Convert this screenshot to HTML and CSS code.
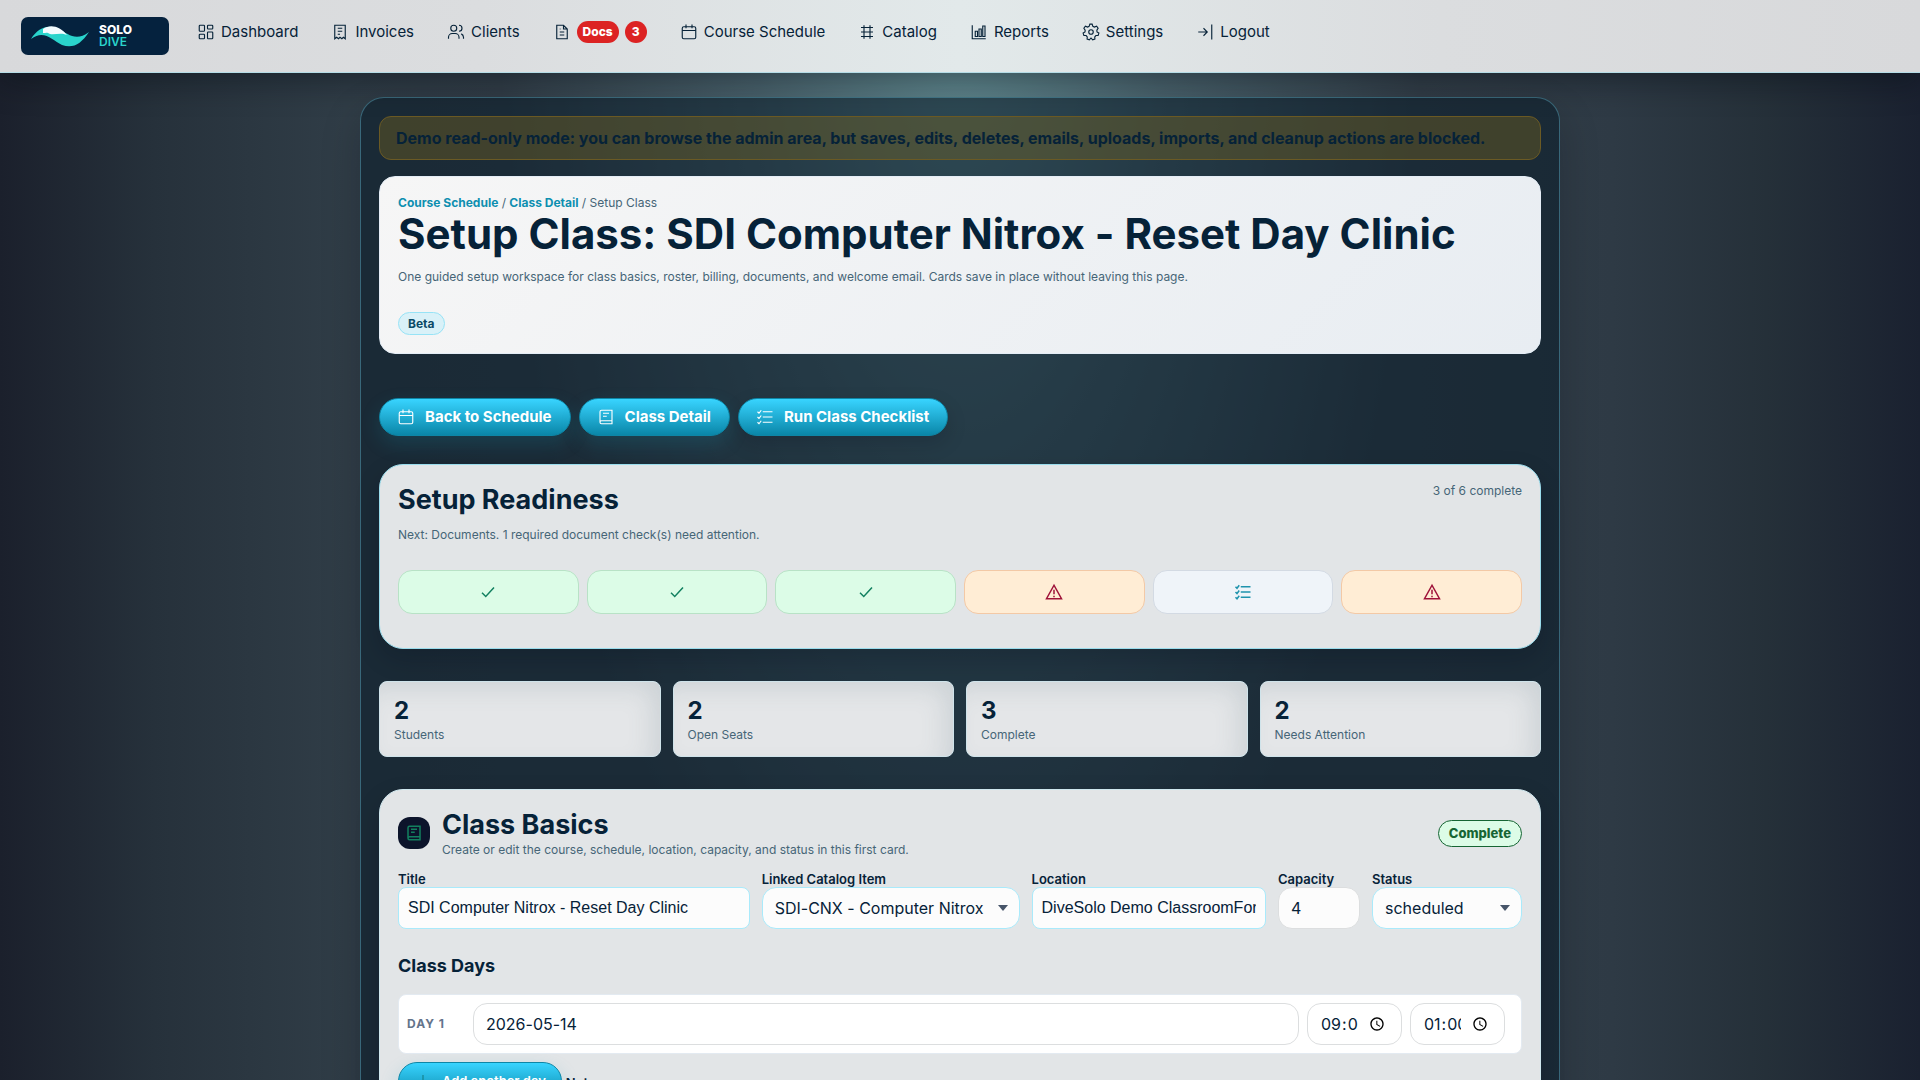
FILE: index.html
```html
<!DOCTYPE html>
<html lang="en">
<head>
<meta charset="utf-8">
<meta name="viewport" content="width=device-width, initial-scale=1">
<title>Setup Class - Solo Dive</title>
<link rel="stylesheet" href="styles.css">
</head>
<body>
<svg class="sprite" aria-hidden="true">
  <symbol id="i-grid" viewBox="0 0 24 24"><rect x="3" y="3" width="7" height="8" rx="1"/><rect x="14" y="3" width="7" height="5" rx="1"/><rect x="3" y="15" width="7" height="6" rx="1"/><rect x="14" y="12" width="7" height="9" rx="1"/></symbol>
  <symbol id="i-receipt" viewBox="0 0 24 24"><path d="M5 21V3h14v18l-2.500-2-2 2-2.500-2-2 2-2.500-2zM9 7h6M9 11h6M9 15h3"/></symbol>
  <symbol id="i-users" viewBox="0 0 24 24"><circle cx="9" cy="7" r="4"/><path d="M2 21v-2a5 5 0 0 1 5-5h4a5 5 0 0 1 5 5v2M16 3a4 4 0 0 1 0 8M22 21v-2a5 5 0 0 0-3-4.500"/></symbol>
  <symbol id="i-file" viewBox="0 0 24 24"><path d="M14 3v5h5M5 3h9l5 5v13H5zM9 12h6M9 16h6M9 8h1"/></symbol>
  <symbol id="i-calendar" viewBox="0 0 24 24"><rect x="3" y="5" width="18" height="16" rx="2"/><path d="M8 2v5M16 2v5M3 10h18"/></symbol>
  <symbol id="i-hash" viewBox="0 0 24 24"><path d="M4 6h16M4 12h16M4 18h16M8 3v18M16 3v18"/></symbol>
  <symbol id="i-chart" viewBox="0 0 24 24"><path d="M3 3v18h18M7 18v-7h3v7zM12 18V8h3v10zM17 18V4h3v14z"/></symbol>
  <symbol id="i-gear" viewBox="0 0 24 24"><circle cx="12" cy="12" r="3"/><path d="M9.500 4.500L10.500 1.500h3l1 3 2 1 3-1.200 2 2.700-1.700 2.500.2 2.500 2.500 1.500-1 3-3 .2-1.500 1.800.2 3-3 1L12 20l-2.200 2.500-3-1 .2-3-1.500-1.800-3-.2-1-3L4 12l.2-2.500L2.500 7l2-2.700 3 1.200z"/></symbol>
  <symbol id="i-logout" viewBox="0 0 24 24"><path d="M3 12h12M10 7l5 5-5 5M21 2v20"/></symbol>
  <symbol id="i-book" viewBox="0 0 24 24"><path d="M20 17V3H6a2 2 0 0 0-2 2v14a2 2 0 0 0 2 2h14v-4H6a2 2 0 0 0-2 2M8 7h8M8 11h5"/></symbol>
  <symbol id="i-list" viewBox="0 0 24 24"><path d="M9 5h13M9 12h13M9 19h13M2 5l2 2 3-4M2 12l2 2 3-4M2 19l2 2 3-4"/></symbol>
  <symbol id="i-check" viewBox="0 0 24 24"><path d="M4 13l5 5L20 6"/></symbol>
  <symbol id="i-alert" viewBox="0 0 24 24"><path d="M12 3L2 21h20zM12 9v6M12 17v2"/></symbol>
  <symbol id="i-plus" viewBox="0 0 24 24"><path d="M12 4v16M4 12h16"/></symbol>
</svg>

<header class="topbar">
  <a class="brand" href="#" aria-label="Solo Dive">
    <svg class="brand-wave" viewBox="0 0 58 22" aria-hidden="true">
      <path d="M0 14C7 3 17-1 28 4c9 5 17 13 30 3C50 19 42 24 31 20 21 15 13 4 0 14z" fill="#2ad4cc"/>
      <path d="M12 4C19-1 29 1 36 10 30 7 24 10 19 9 16 7 15 8 12 8z" fill="#f3fbff"/>
    </svg>
    <span class="brand-name"><span>SOLO</span><span class="brand-dive">DIVE</span></span>
  </a>
  <nav class="nav">
    <a href="#"><svg class="icon"><use href="#i-grid"/></svg>Dashboard</a>
    <a href="#"><svg class="icon"><use href="#i-receipt"/></svg>Invoices</a>
    <a href="#"><svg class="icon"><use href="#i-users"/></svg>Clients</a>
    <a href="#"><svg class="icon"><use href="#i-file"/></svg><span class="alert-pill">Docs</span><span class="alert-pill alert-count">3</span></a>
    <a href="#"><svg class="icon"><use href="#i-calendar"/></svg>Course Schedule</a>
    <a href="#"><svg class="icon"><use href="#i-hash"/></svg>Catalog</a>
    <a href="#"><svg class="icon"><use href="#i-chart"/></svg>Reports</a>
    <a href="#"><svg class="icon"><use href="#i-gear"/></svg>Settings</a>
    <a href="#"><svg class="icon"><use href="#i-logout"/></svg>Logout</a>
  </nav>
</header>

<main class="scroller">
  <div class="shell">
    <div class="notice">Demo read-only mode: you can browse the admin area, but saves, edits, deletes, emails, uploads, imports, and cleanup actions are blocked.</div>

    <section class="hero">
      <div class="crumbs"><a href="#">Course Schedule</a> / <a href="#">Class Detail</a> / Setup Class</div>
      <h1>Setup Class: SDI Computer Nitrox - Reset Day Clinic</h1>
      <p class="muted">One guided setup workspace for class basics, roster, billing, documents, and welcome email. Cards save in place without leaving this page.</p>
      <span class="beta">Beta</span>
    </section>

    <div class="actions">
      <button class="btn" type="button"><svg class="icon"><use href="#i-calendar"/></svg>Back to Schedule</button>
      <button class="btn" type="button"><svg class="icon"><use href="#i-book"/></svg>Class Detail</button>
      <button class="btn btn-flat" type="button"><svg class="icon"><use href="#i-list"/></svg>Run Class Checklist</button>
    </div>

    <section class="card readiness">
      <div class="card-top">
        <h2>Setup Readiness</h2>
        <span class="muted progress">3 of 6 complete</span>
      </div>
      <p class="muted">Next: Documents. 1 required document check(s) need attention.</p>
      <div class="steps">
        <a class="step done" href="#" aria-label="Class basics"><svg class="icon"><use href="#i-check"/></svg></a>
        <a class="step done" href="#" aria-label="Roster"><svg class="icon"><use href="#i-check"/></svg></a>
        <a class="step done" href="#" aria-label="Billing"><svg class="icon"><use href="#i-check"/></svg></a>
        <a class="step warn" href="#" aria-label="Documents"><svg class="icon"><use href="#i-alert"/></svg></a>
        <a class="step" href="#" aria-label="Checklist"><svg class="icon"><use href="#i-list"/></svg></a>
        <a class="step warn" href="#" aria-label="Welcome email"><svg class="icon"><use href="#i-alert"/></svg></a>
      </div>
    </section>

    <div class="stats">
      <div class="stat"><strong>2</strong><span class="muted">Students</span></div>
      <div class="stat"><strong>2</strong><span class="muted">Open Seats</span></div>
      <div class="stat"><strong>3</strong><span class="muted">Complete</span></div>
      <div class="stat"><strong>2</strong><span class="muted">Needs Attention</span></div>
    </div>

    <section class="card basics">
      <div class="card-head">
        <span class="badge-icon"><svg class="icon"><use href="#i-book"/></svg></span>
        <div class="card-title">
          <h2>Class Basics</h2>
          <p class="muted">Create or edit the course, schedule, location, capacity, and status in this first card.</p>
        </div>
        <span class="status">Complete</span>
      </div>
      <div class="fields">
        <div class="field"><label for="title">Title</label><input class="plain" id="title" type="text" value="SDI Computer Nitrox - Reset Day Clinic"></div>
        <div class="field"><label for="item">Linked Catalog Item</label><select id="item"><option>SDI-CNX - Computer Nitrox Diver</option></select></div>
        <div class="field"><label for="location">Location</label><input class="plain" id="location" type="text" value="DiveSolo Demo ClassroomFort Lauderdale"></div>
        <div class="field"><label for="capacity">Capacity</label><input class="soft" id="capacity" type="number" value="4"></div>
        <div class="field"><label for="status">Status</label><select id="status"><option>scheduled</option></select></div>
      </div>
      <h3>Class Days</h3>
      <div class="day">
        <label for="day1">DAY 1</label>
        <input class="soft" id="day1" type="text" value="2026-05-14">
        <input class="soft" type="time" aria-label="Start time" value="09:00">
        <input class="soft" type="time" aria-label="End time" value="13:00">
      </div>
      <div class="after-days">
        <button class="btn btn-small" type="button"><svg class="icon icon-add"><use href="#i-plus"/></svg>Add another day</button>
        <label for="notes">Notes</label>
      </div>
      <textarea class="notes" id="notes"></textarea>
    </section>
  </div>
</main>
</body>
</html>
```
FILE: styles.css
```css
* { box-sizing: border-box; }

:root {
  --ink: #062238;
  --muted: #466577;
  --line: #a9eafb;
}

body {
  margin: 0;
  height: 100vh;
  display: flex;
  flex-direction: column;
  overflow: hidden;
  color: var(--ink);
  font: 16px/24px Inter, "Liberation Sans", sans-serif;
  font-feature-settings: "calt" 0;
  background:
    radial-gradient(ellipse 24% 100% at 50% 0, rgba(120, 175, 180, 0.7), rgba(110, 155, 165, 0.4) 45%, rgba(90, 130, 145, 0) 100%),
    linear-gradient(90deg, #1b202c 0, #26313b 8%, #303d47 18%, #333f49 26%, #333f49 74%, #2e3a45 84%, #253039 92%, #1a2130 100%);
}

h1, h2, h3, p { margin: 0; }
a { color: inherit; text-decoration: none; }
input, select, button, textarea { font: inherit; color: inherit; margin: 0; }

.sprite { position: absolute; width: 0; height: 0; }

.icon {
  width: 18px;
  height: 18px;
  flex: none;
  fill: none;
  stroke: currentColor;
  stroke-width: 2;
}

/* Top bar */
.topbar {
  position: relative;
  z-index: 1;
  flex: none;
  display: flex;
  align-items: flex-start;
  gap: 28px;
  padding: 17px 21px;
  border-bottom: 1px solid #b5dce6;
  background: linear-gradient(90deg, #d8d9db 0, #dbdddf 25%, #e2e9ea 50%, #dbdddf 75%, #d8d9db 100%);
  box-shadow: 0 8px 32px rgba(0, 8, 16, 0.4);
}
.brand {
  display: flex;
  align-items: center;
  gap: 10px;
  width: 148px;
  height: 38px;
  padding-left: 10px;
  border-radius: 7px;
  background: #05223e;
}
.brand-wave { width: 58px; height: 22px; }
.brand-name {
  display: flex;
  flex-direction: column;
  color: #fff;
  font-size: 12px;
  font-weight: 800;
  line-height: 12px;
}
.brand-dive { color: #2ad4cc; font-weight: 600; }
.nav { display: flex; align-items: center; gap: 33px; height: 30px; font-size: 15px; }
.nav a { display: flex; align-items: center; gap: 6px; white-space: nowrap; }
.nav .icon { stroke-width: 1.500; }
.alert-pill {
  padding: 0 6px;
  border-radius: 11px;
  background: #dc2323;
  color: #fff;
  font-size: 12px;
  font-weight: 800;
  line-height: 22px;
}
.alert-count { width: 22px; padding: 0; text-align: center; }

/* Page shell */
.scroller { flex: 1; overflow-y: auto; scrollbar-width: none; padding: 24px 24px 48px; }
.shell {
  max-width: 1200px;
  margin: 0 auto;
  padding: 18px;
  border: 1px solid rgba(90, 165, 190, 0.5);
  border-radius: 24px;
  background: rgba(11, 30, 43, 0.6);
  box-shadow: 0 16px 40px rgba(0, 8, 16, 0.2);
}
.muted { color: var(--muted); font-size: 12px; line-height: 18px; }

.notice {
  padding: 9px 16px;
  border: 1px solid #6b5a24;
  border-radius: 12px;
  background: rgba(120, 100, 30, 0.4);
  font-weight: 700;
}

.hero {
  margin-top: 16px;
  padding: 18px;
  border: 1px solid #e4edf6;
  border-radius: 16px;
  background: linear-gradient(135deg, #f6f6f6, #e8edf2);
}
.crumbs { color: var(--muted); font-size: 12px; line-height: 16px; }
.crumbs a { color: #0e8fb0; font-weight: 700; }
h1 { font-size: 42px; line-height: 46px; font-weight: 700; }
.hero .muted { margin-top: 11px; }
.beta {
  display: block;
  width: fit-content;
  margin-top: 26px;
  padding: 0 9px;
  border: 1px solid #97e3f6;
  border-radius: 12px;
  background: #d9f1f8;
  color: #0b4a66;
  font-size: 12px;
  font-weight: 700;
  line-height: 21px;
}

.actions { display: flex; gap: 8px; margin-top: 44px; }
.btn {
  display: flex;
  align-items: center;
  gap: 10px;
  height: 38px;
  padding: 0 18px 0 17px;
  border: 1px solid #0e86a6;
  border-radius: 19px;
  background: linear-gradient(#38d4ff, #0a86a8);
  color: #fff;
  font-size: 15px;
  font-weight: 700;
  white-space: nowrap;
  box-shadow: 0 8px 20px rgba(20, 150, 180, 0.2);
}
.btn .icon { stroke-width: 1.500; }
.btn .icon-add { color: #15808a; }
.btn-flat { box-shadow: 0 8px 20px rgba(0, 10, 20, 0.15); }
.btn-small { padding: 0 15px; font-size: 13px; font-weight: 600; }

.card {
  padding: 18px;
  border: 1px solid #9adcec;
  border-radius: 24px;
  background: #e2e5e7;
  box-shadow: 0 10px 24px rgba(0, 12, 24, 0.2);
}
h2 { font-size: 27px; line-height: 34px; font-weight: 700; }
.readiness { margin-top: 28px; padding-bottom: 34px; }
.card-top { display: flex; justify-content: space-between; }
.readiness p { margin-top: 9px; }
.progress { line-height: 16px; }
.steps { display: grid; grid-template-columns: repeat(6, 1fr); gap: 8px; margin-top: 26px; }
.step {
  display: flex;
  align-items: center;
  justify-content: center;
  height: 44px;
  border: 1px solid #d3dae3;
  border-radius: 14px;
  background: #eff4f9;
  color: #1f93ad;
}
.step.done { border-color: #b8e2c6; background: #dcfce7; color: #128060; }
.step.warn { border-color: #f3c9a6; background: #ffedd5; color: #9f1239; }

.stats { display: grid; grid-template-columns: repeat(4, 1fr); gap: 12px; margin-top: 32px; }
.stat {
  display: flex;
  flex-direction: column;
  padding: 14px 14px 12px;
  border: 1px solid #cfe3ea;
  border-radius: 8px;
  background: #e4e6e8;
  box-shadow: inset -12px 10px 24px -4px rgba(90, 110, 125, 0.16);
}
.stat strong { font-size: 24px; line-height: 30px; }

/* Class basics */
.basics { margin-top: 32px; border-color: #cfe7ee; }
.card-head { display: flex; align-items: center; gap: 12px; }
.badge-icon {
  display: flex;
  align-items: center;
  justify-content: center;
  width: 32px;
  height: 32px;
  border-radius: 12px;
  background: #0c142b;
  color: #12805f;
}
.card-title { flex: 1; }
.card-title .muted { line-height: 16px; }
.status {
  padding: 0 10px;
  border: 1px solid #166534;
  border-radius: 14px;
  background: #dcfce7;
  color: #166534;
  font-size: 13px;
  font-weight: 800;
  line-height: 25px;
}
.fields {
  display: grid;
  grid-template-columns: 1.5fr 1.1fr 1fr 82px 150px;
  gap: 12px;
  margin-top: 13px;
}
.field { display: flex; flex-direction: column; min-width: 0; }
.field label, .after-days label { font-size: 13px; line-height: 16px; font-weight: 600; }
input, select {
  width: 100%;
  min-width: 0;
  height: 42px;
  padding: 0 12px;
  border: 1px solid var(--line);
  border-radius: 14px;
  background: #fcfcfc;
}
.plain { padding: 0 9px; border-radius: 8px; font-family: "Liberation Sans", Arial, sans-serif; }
.soft { border-color: #dcdedf; }
select {
  appearance: none;
  padding-right: 34px;
  background: #fcfcfc url("data:image/svg+xml,%3Csvg xmlns='http://www.w3.org/2000/svg' width='10' height='6'%3E%3Cpath d='M0 0h10L5 6z' fill='%23475569'/%3E%3C/svg%3E") no-repeat right 11px center;
}
h3 { margin-top: 25px; font-size: 18px; line-height: 24px; font-weight: 700; }
.day {
  display: grid;
  grid-template-columns: 58px 1fr 95px 95px;
  align-items: center;
  gap: 8px;
  margin-top: 16px;
  padding: 8px 16px 8px 8px;
  border: 1px solid #e3eaf1;
  border-radius: 8px;
  background: #fff;
}
.day label { color: #64748b; font-size: 12px; line-height: 16px; font-weight: 700; letter-spacing: 1px; }
.day input { background: #fff; }
.after-days { display: flex; align-items: center; gap: 4px; margin-top: 8px; }
.after-days label { padding-top: 4px; }
.notes { display: block; width: 100%; height: 84px; margin-top: 8px; border: 1px solid var(--line); border-radius: 14px; }
```
